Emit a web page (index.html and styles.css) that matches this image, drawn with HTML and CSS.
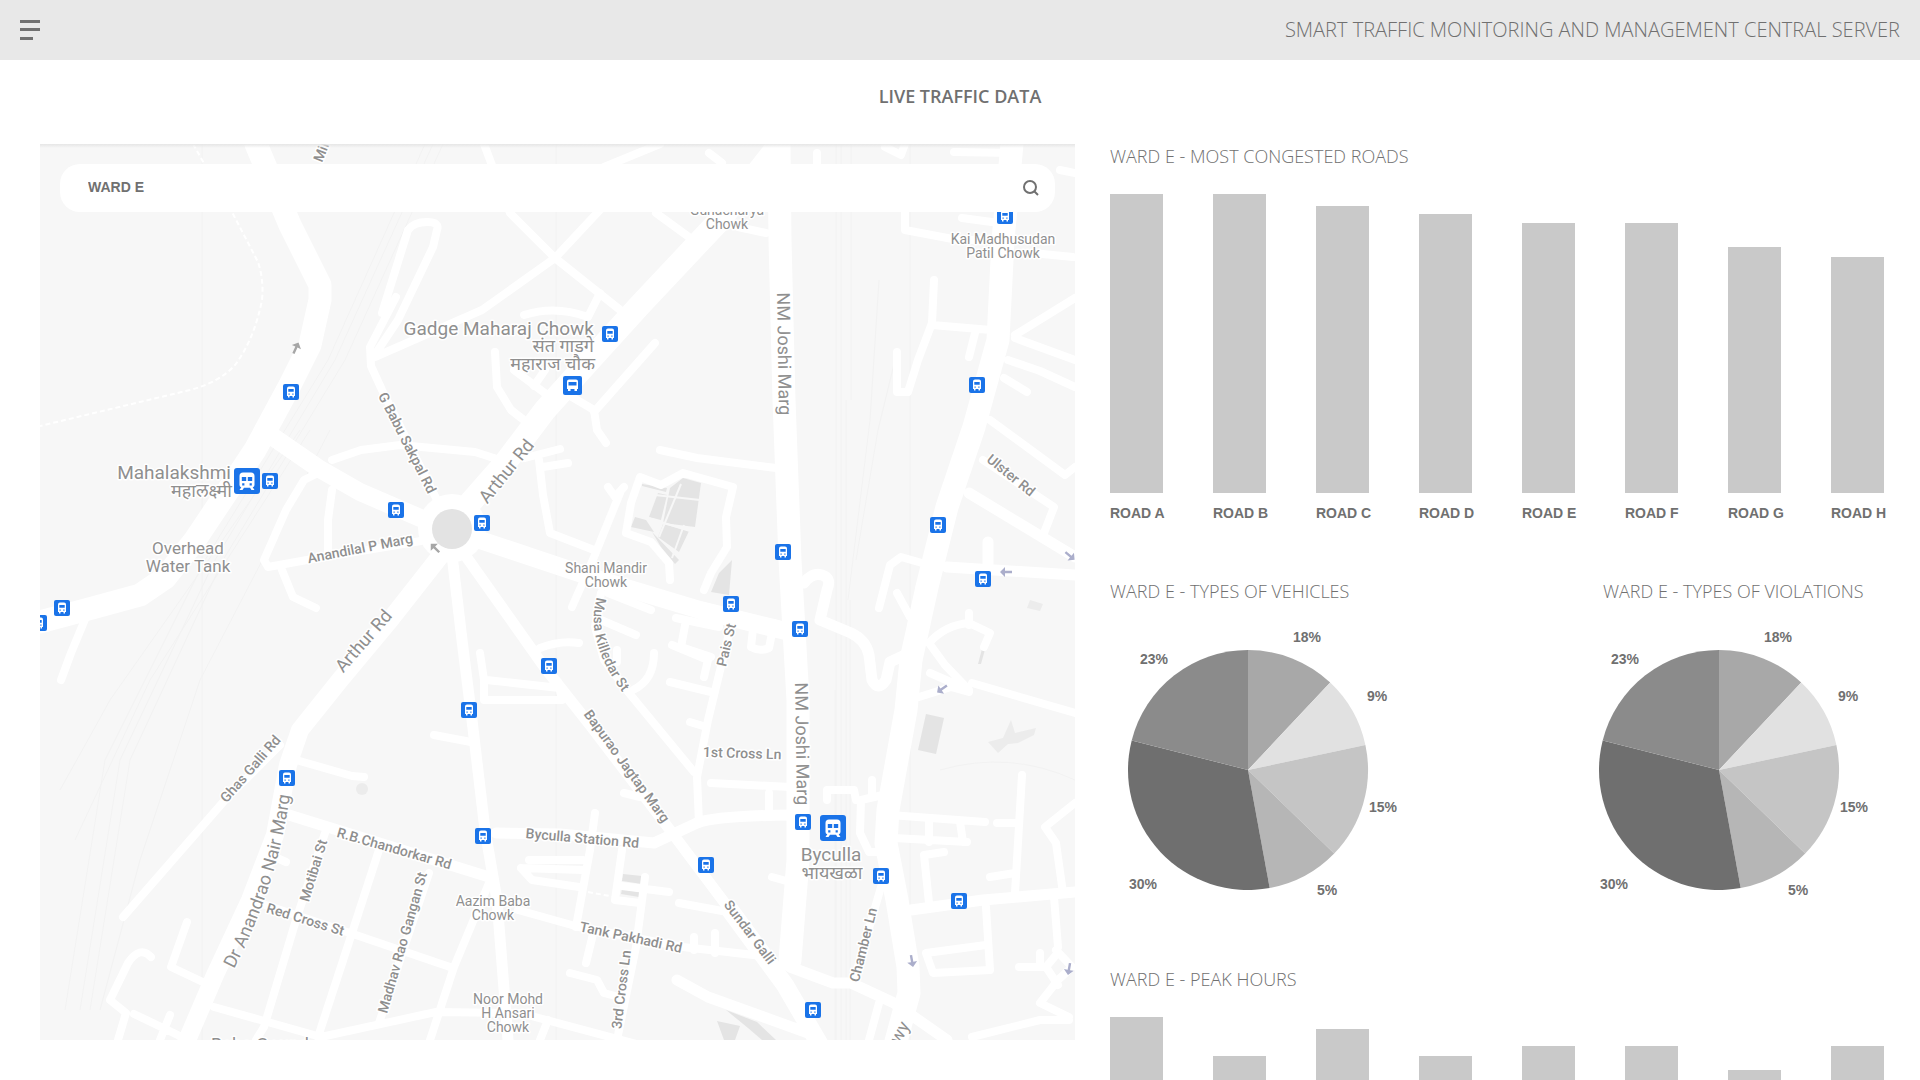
FILE: index.html
```html
<!DOCTYPE html>
<html lang="en">
<head>
<meta charset="utf-8">
<meta name="viewport" content="width=device-width, initial-scale=1">
<title>Smart Traffic Monitoring – Live Traffic Data</title>
<link rel="stylesheet" href="styles.css">
</head>
<body>
<header class="topbar">
  <button class="menu-button" type="button" aria-label="Open menu">
    <svg class="menu-icon" viewBox="0 0 20 20" aria-hidden="true"><path d="M0 0h20v3H0zM0 8h20v3H0zM0 17h13v3H0z"/></svg>
  </button>
  <p class="product-name">SMART TRAFFIC MONITORING AND MANAGEMENT CENTRAL SERVER</p>
</header>

<h1 class="page-title">LIVE TRAFFIC DATA</h1>

<main class="dashboard">
  <section class="map" aria-label="Traffic map">
    <svg class="map-canvas" viewBox="40 144 1035 896" role="img" aria-label="Map of Ward E">
      <defs>
        <symbol id="bus" viewBox="0 0 16 16">
          <rect class="pin" width="16" height="16" rx="2"/>
          <path class="glyph" fill-rule="evenodd" d="M4 12V4.500Q4 2.500 6 2.500h4q2 0 2 2V12h-1v1.500H9.500V12h-3v1.500H5V12zM5.300 5v2.800h5.400V5zM5.500 9.500v1.200h1.200V9.500zM9.300 9.500v1.200h1.200V9.500z"/>
        </symbol>
        <symbol id="hub" viewBox="0 0 19 19">
          <rect class="pin" width="19" height="19" rx="2"/>
          <path class="glyph" fill-rule="evenodd" d="M4 13V5.500Q4 3.500 6 3.500h7q2 0 2 2V13h-1v2h-2.500v-2h-4v2H5v-2zM5.500 6v3.500h8V6z"/>
        </symbol>
        <symbol id="train" viewBox="0 0 26 26">
          <rect class="pin" width="26" height="26" rx="3"/>
          <path class="glyph" fill-rule="evenodd" d="M5.500 17V8Q5.500 4.500 9 4.500h8q3.500 0 3.500 3.500v9q0 1.800-1.800 2.200L20.500 22h-3l-1.500-2.200h-6L8.500 22h-3l1.800-2.800Q5.500 18.800 5.500 17zM7.800 9v4h4.400V9zM13.800 9v4h4.400V9zM8.200 15.200v2.200h2.200v-2.200zM15.600 15.200v2.200h2.200v-2.200z"/>
        </symbol>
        <path id="arrow" d="M-6-1.200H1V-5L6 0 1 5V1.200H-6z"/>
        <path id="musa" d="M597 597Q584 640 623 693"/>
        <path id="nair" d="M234 969Q280 880 291 786"/>
      </defs>

      <rect class="land" x="40" y="144" width="1035" height="896"/>

      <g class="rails">
        <path d="M433 144L335 360 215 560 120 760 80 1010M443 144L345 360 223 560 130 760 90 1010M425 144L328 360 205 560 105 760 65 1010M330 430L200 680 140 860 100 1010M310 430L150 680 75 840M300 430L110 700 60 790"/>
        <path d="M836 144V1040M841 144V1040M846 400V1040M851 144V400M879 280L870 420 848 600M895 360L878 430 856 560M850 600V1040M835 690V1040M940 770Q1010 750 1075 780"/>
        <path d="M202 144V1040M556 144V1040M910 144V1040"/>
      </g>

      <g class="blocks">
        <path d="M642 484L667 488 666 492 642 486zM658 493L667 495 661 520 649 517zM670 488L683 478 701 483 695 527 663 523zM635 517L646 520 654 532 631 527zM663 524L689 531 679 552 658 537zM652 532L679 560 675 564 661 547z"/>
        <path d="M732 560L729 595 711 592 719 573zM717 1021L740 1026 735 1040 724 1040zM726 1010L757 1022 776 1040 762 1040 748 1028zM926 714L944 718 936 754 918 750z"/>
        <path class="faint" d="M988 742L1003 738 1011 720 1015 733 1036 728 1034 735 1018 743 1008 744 998 753zM1030 600L1043 604 1040 611 1027 608z"/>
        <path d="M983 645L986 646 981 664 978 664zM952 679L972 685 971 687 952 681zM623 874L642 876 642 884 622 881zM622 889L639 892 639 897 621 894z"/>
        <circle class="faint" cx="362" cy="789" r="6"/>
      </g>
      <path class="paths" d="M648 518L690 531M681 484L659 537M684 525L672 558M655 495L700 500"/>

      <g class="roads narrow">
        <path d="M382 313L408 230Q414 222 427 222T437 230L433 247 398 320 376 353M396 297L370 347 371 366 382 390 442 510M375 357L482 310 555 258 612 197M484 144L510 213 555 258 624 313M524 315Q555 305 588 317L600 293"/>
        <path d="M604 167L660 144M495 352L497 387 511 410 529 424M514 370L550 397M534 386L545 370M332 460L361 450 400 445 475 452 500 460M318 473L304 480 286 510 264 560 268 567 307 560 421 541M332 490L328 520V555M282 570L293 597 316 608M86 617L71 653 61 680"/>
        <path d="M539 460L543 495 550 533 594 550M525 458L560 449M543 467L568 463M480 653L484 680V700H562L558 682M486 680L560 688M540 648Q560 640 579 643M572 397L594 410 597 430 606 443M594 412L640 360 655 343M660 450L697 458 776 468"/>
        <path d="M626 533L631 503 640 477 661 485 683 473 733 487 726 517 727 547 711 573 704 590M626 533L651 542 669 563 670 580M608 487L615 497 624 487M620 493L594 557 572 607M608 593L651 610M601 620L636 635M676 618L719 627M686 620L681 647 711 657M672 645L708 660 704 677M670 682L711 692M654 653Q654 680 633 690"/>
        <path d="M733 617L708 720 697 777 699 823M754 620L751 647Q760 652 769 648L774 623M617 650V662M601 593L595 627 604 660 629 693 694 772M879 608L890 565 901 557 922 563M897 593L910 617M990 420L1065 475 1075 467M983 460L1054 507 1044 533M1008 360L1040 371 1075 387M1004 378L1027 392"/>
        <path d="M934 280L932 323 918 360 908 392H897V352M932 325L991 330M975 333L969 357M1015 335L1075 298M1015 338L1075 360M1073 257L1032 253M905 213V230L958 240H1000M962 218L999 223M885 147L901 155 905 144M954 152L1015 153M1060 170L1075 173M709 153L722 163M779 144L771 163M817 153V164M656 213L693 240M738 227L766 233"/>
        <path d="M929 643Q945 625 969 623L990 633 984 647M969 613V625M929 643L945 665 969 690 930 673M972 683L1075 713M919 697L951 687 969 692M280 745L225 800 123 917M296 760L352 776 364 777M275 857L286 862M325 833L296 920 264 1027 256 1040M379 850L352 933 318 1037M429 873L379 1023M250 900L350 933 450 967M489 883L454 967 430 1040"/>
        <path d="M214 1007L321 1037 436 1012 520 1013 640 1045M518 910L579 927 683 947 772 957M434 735L471 742M187 922L171 967 207 984M151 957Q140 945 128 963L110 1000 126 1013 118 1040M134 1014L182 1037M170 1015L160 1040M529 860H583M521 868L583 870M521 868L532 880 579 887"/>
        <path d="M595 813L590 850 576 927M622 850L615 900 640 903M645 877L636 947 617 1040M622 886L669 892M594 930L586 963M679 903L733 913M624 793L640 797M769 793V813M711 783L790 787M690 722L703 726M772 877L790 882M694 937V950M715 933V953M570 973L597 980 604 993 619 997M548 1020L540 1040"/>
        <path d="M827 800V790H854L856 800M872 780V793M861 800L860 833 869 852H885M861 800L883 795M890 815L985 822M929 822V842M960 822L963 842M894 838L967 842M944 852L924 855 929 903M1022 775L1015 893M997 823H1018M990 877L1015 873M1075 803L1045 827 1056 843 1063 893M1054 897L1058 947"/>
        <path d="M1056 950L1072 967 1058 980 1040 1003 1069 1017M1056 955L1046 967 1058 985M1019 967H1047M1040 953V967M972 1037L1040 1020 1069 1020M986 907L990 970 933 973 926 953 986 945M881 887L854 980M879 1003L869 1040"/>
      </g>

      <g class="roads medium">
        <path d="M452 555L462 640 472 720 485 830 497 900 508 1040M465 555L545 668 590 725 670 830 730 910M289 815L489 877M496 833L560 834 654 843 697 823Q715 816 790 815M804 583Q812 572 822 575T827 590L820 620 851 633Q866 640 869 655L872 680Q878 692 886 680L890 662 905 655M969 493L1075 557M947 567L1075 575M988 542V565M677 980L708 997 819 1037M790 967L833 983H851L894 1003 947 1040M911 910L983 900 1075 892"/>
      </g>

      <g class="roads wide">
        <path d="M263 430L318 468 360 492 425 520M480 540L540 560 600 580 700 610 790 632M445 550L390 620 340 680 300 730 288 765 275 835 250 900 215 975 185 1045M730 910L785 985 820 1045"/>
      </g>

      <g class="roads arterial">
        <path d="M256 144L290 225 320 285V300L310 345 290 385 255 450 195 540 165 578 140 595 85 610 40 622M455 520L505 463 545 410 590 360 640 305 720 220 775 150M779 144L780 240 784 400 790 560 798 700V860L790 960M1012 144L1003 240 998 340 974 427 947 507 927 587 911 660 906 710 888 810 886 843 897 900 908 967 909 993 895 1045"/>
      </g>

      <circle class="roundabout" cx="452" cy="528" r="34"/>
      <circle class="island" cx="452" cy="529" r="20"/>
      <path class="track" d="M193 144L205 165 232 212 258 262Q264 280 262 300 254 340 235 365 220 382 190 390L40 426M588 892L615 897"/>

      <g class="arrows">
        <use href="#arrow" class="gray" transform="translate(296 348) rotate(-65)"/>
        <use href="#arrow" class="gray" transform="translate(435 548) rotate(-135)"/>
        <use href="#arrow" transform="translate(1070 556) rotate(40)"/>
        <use href="#arrow" transform="translate(1006 572) rotate(180)"/>
        <use href="#arrow" transform="translate(942 689) rotate(145)"/>
        <use href="#arrow" transform="translate(912 961) rotate(80)"/>
        <use href="#arrow" transform="translate(1069 969) rotate(100)"/>
      </g>

      <g class="label street">
        <text transform="translate(322 163) rotate(-68)">Mill Rd</text>
        <g text-anchor="middle">
          <text transform="translate(403 445) rotate(63)">G Babu Sakpal Rd</text>
          <text transform="translate(361 553) rotate(-11)">Anandilal P Marg</text>
          <text transform="translate(1008 479) rotate(39)">Ulster Rd</text>
          <text transform="translate(731 646) rotate(-77)">Pais St</text>
          <text transform="translate(623 769) rotate(54)">Bapurao Jagtap Marg</text>
          <text transform="translate(582 843) rotate(5)">Byculla Station Rd</text>
          <text transform="translate(742 758) rotate(2)">1st Cross Ln</text>
          <text transform="translate(254 772) rotate(-49)">Ghas Galli Rd</text>
          <text transform="translate(318 872) rotate(-73)">Motibai St</text>
          <text transform="translate(304 924) rotate(17)">Red Cross St</text>
          <text transform="translate(393 853) rotate(16)">R.B.Chandorkar Rd</text>
          <text transform="translate(407 944) rotate(-74)">Madhav Rao Gangan St</text>
          <text transform="translate(630 942) rotate(12)">Tank Pakhadi Rd</text>
          <text transform="translate(626 990) rotate(-83)">3rd Cross Ln</text>
          <text transform="translate(746 935) rotate(53)">Sundar Galli</text>
          <text transform="translate(868 946) rotate(-76)">Chamber Ln</text>
        </g>
        <text><textPath href="#musa">Musa Killedar St</textPath></text>
      </g>

      <g class="label avenue">
        <g text-anchor="middle">
          <text transform="translate(778 354) rotate(89)">NM Joshi Marg</text>
          <text transform="translate(796 744) rotate(89)">NM Joshi Marg</text>
          <text transform="translate(511 475) rotate(-51)">Arthur Rd</text>
          <text transform="translate(368 645) rotate(-49)">Arthur Rd</text>
          <text transform="translate(902 1041) rotate(-62)">Hwy</text>
        </g>
        <text><textPath href="#nair">Dr Anandrao Nair Marg</textPath></text>
        <text x="211" y="1051">Baba Gound</text>
      </g>

      <g class="label place" text-anchor="middle">
        <text><tspan x="727" y="215">Gunacharya</tspan><tspan x="727" y="229">Chowk</tspan></text>
        <text><tspan x="1003" y="244">Kai Madhusudan</tspan><tspan x="1003" y="258">Patil Chowk</tspan></text>
        <text><tspan x="606" y="573">Shani Mandir</tspan><tspan x="606" y="587">Chowk</tspan></text>
        <text><tspan x="493" y="906">Aazim Baba</tspan><tspan x="493" y="920">Chowk</tspan></text>
        <text><tspan x="508" y="1004">Noor Mohd</tspan><tspan x="508" y="1018">H Ansari</tspan><tspan x="508" y="1032">Chowk</tspan></text>
        <text class="landmark"><tspan x="188" y="554">Overhead</tspan><tspan x="188" y="572">Water Tank</tspan></text>
      </g>

      <g class="label station">
        <g text-anchor="end">
          <text x="594" y="335">Gadge Maharaj Chowk</text>
          <text x="231" y="479">Mahalakshmi</text>
          <text class="local" lang="mr" x="594" y="352">संत गाडगे</text>
          <text class="local" lang="mr" x="595" y="370">महाराज चौक</text>
          <text class="local" lang="mr" x="232" y="497">महालक्ष्मी</text>
        </g>
        <g text-anchor="middle">
          <text x="831" y="861">Byculla</text>
          <text class="local" lang="mr" x="832" y="879">भायखळा</text>
        </g>
      </g>

      <g class="stops">
        <use href="#bus" x="283" y="384" width="16" height="16"/>
        <use href="#bus" x="262" y="473" width="16" height="16"/>
        <use href="#bus" x="388" y="502" width="16" height="16"/>
        <use href="#bus" x="474" y="515" width="16" height="16"/>
        <use href="#bus" x="54" y="600" width="16" height="16"/>
        <use href="#bus" x="31" y="615" width="16" height="16"/>
        <use href="#bus" x="541" y="658" width="16" height="16"/>
        <use href="#bus" x="461" y="702" width="16" height="16"/>
        <use href="#bus" x="602" y="326" width="16" height="16"/>
        <use href="#bus" x="997" y="208" width="16" height="16"/>
        <use href="#bus" x="969" y="377" width="16" height="16"/>
        <use href="#bus" x="930" y="517" width="16" height="16"/>
        <use href="#bus" x="775" y="544" width="16" height="16"/>
        <use href="#bus" x="975" y="571" width="16" height="16"/>
        <use href="#bus" x="723" y="596" width="16" height="16"/>
        <use href="#bus" x="792" y="621" width="16" height="16"/>
        <use href="#bus" x="279" y="770" width="16" height="16"/>
        <use href="#bus" x="475" y="828" width="16" height="16"/>
        <use href="#bus" x="698" y="857" width="16" height="16"/>
        <use href="#bus" x="795" y="814" width="16" height="16"/>
        <use href="#bus" x="873" y="868" width="16" height="16"/>
        <use href="#bus" x="951" y="893" width="16" height="16"/>
        <use href="#bus" x="805" y="1002" width="16" height="16"/>
        <use href="#hub" x="563" y="376" width="19" height="19"/>
        <use href="#train" x="234" y="468" width="26" height="26"/>
        <use href="#train" x="820" y="815" width="26" height="26"/>
      </g>
    </svg>

    <form class="search" role="search">
      <input class="search-input" type="text" value="WARD E" aria-label="Search ward">
      <button class="search-button" type="button" aria-label="Search">
        <svg class="search-icon" viewBox="0 0 16 16" aria-hidden="true"><circle cx="7" cy="7" r="6"/><path d="M11.500 11.500L15 15"/></svg>
      </button>
    </form>
  </section>

  <div class="insights">
    <section class="panel">
      <h2 class="panel-title">WARD E - MOST CONGESTED ROADS</h2>
      <ul class="bars roads-chart">
        <li class="bar-item"><span class="bar" style="height:299px"></span><span class="bar-label">ROAD A</span></li>
        <li class="bar-item"><span class="bar" style="height:299px"></span><span class="bar-label">ROAD B</span></li>
        <li class="bar-item"><span class="bar" style="height:287px"></span><span class="bar-label">ROAD C</span></li>
        <li class="bar-item"><span class="bar" style="height:279px"></span><span class="bar-label">ROAD D</span></li>
        <li class="bar-item"><span class="bar" style="height:270px"></span><span class="bar-label">ROAD E</span></li>
        <li class="bar-item"><span class="bar" style="height:270px"></span><span class="bar-label">ROAD F</span></li>
        <li class="bar-item"><span class="bar" style="height:246px"></span><span class="bar-label">ROAD G</span></li>
        <li class="bar-item"><span class="bar" style="height:236px"></span><span class="bar-label">ROAD H</span></li>
      </ul>
    </section>

    <div class="pie-row">
      <section class="panel">
        <h2 class="panel-title">WARD E - TYPES OF VEHICLES</h2>
        <svg class="pie pie-indent" viewBox="-120 -141 285 271" role="img" aria-label="Types of vehicles">
          <g id="pie-slices">
            <path fill="#a8a8a8" d="M0 0V-120A120 120 0 0 1 82.200-87.500z"/>
            <path fill="#e1e1e1" d="M0 0L82.200-87.500A120 120 0 0 1 117.400-25z"/>
            <path fill="#c5c5c5" d="M0 0L117.400-25A120 120 0 0 1 86.200 83.500z"/>
            <path fill="#b6b6b6" d="M0 0L86.200 83.500A120 120 0 0 1 21.700 118z"/>
            <path fill="#6f6f6f" d="M0 0L21.700 118A120 120 0 0 1-116.300-29.600z"/>
            <path fill="#8b8b8b" d="M0 0L-116.300-29.600A120 120 0 0 1 0-120z"/>
          </g>
          <g class="pie-label">
            <text x="45" y="-128">18%</text><text x="119" y="-69">9%</text><text x="121" y="42">15%</text>
            <text x="69" y="125">5%</text><text x="-119" y="119">30%</text><text x="-108" y="-106">23%</text>
          </g>
        </svg>
      </section>
      <section class="panel">
        <h2 class="panel-title title-indent">WARD E - TYPES OF VIOLATIONS</h2>
        <svg class="pie" viewBox="-120 -141 285 271" role="img" aria-label="Types of violations">
          <use href="#pie-slices"/>
          <g class="pie-label">
            <text x="45" y="-128">18%</text><text x="119" y="-69">9%</text><text x="121" y="42">15%</text>
            <text x="69" y="125">5%</text><text x="-119" y="119">30%</text><text x="-108" y="-106">23%</text>
          </g>
        </svg>
      </section>
    </div>

    <section class="panel">
      <h2 class="panel-title">WARD E - PEAK HOURS</h2>
      <ul class="bars">
        <li class="bar-item"><span class="bar" style="height:63px"></span></li>
        <li class="bar-item"><span class="bar" style="height:24px"></span></li>
        <li class="bar-item"><span class="bar" style="height:51px"></span></li>
        <li class="bar-item"><span class="bar" style="height:24px"></span></li>
        <li class="bar-item"><span class="bar" style="height:34px"></span></li>
        <li class="bar-item"><span class="bar" style="height:34px"></span></li>
        <li class="bar-item"><span class="bar" style="height:10px"></span></li>
        <li class="bar-item"><span class="bar" style="height:34px"></span></li>
      </ul>
    </section>
  </div>
</main>
</body>
</html>
```
FILE: styles.css
```css
* {
  box-sizing: border-box;
}

body {
  margin: 0;
  background: #fff;
  color: #707070;
  font-family: "Open Sans", "Noto Sans", sans-serif;
}

button {
  padding: 0;
  border: 0;
  background: none;
  cursor: pointer;
}

.topbar {
  display: flex;
  align-items: center;
  justify-content: space-between;
  height: 60px;
  padding: 0 20px;
  background: #e8e8e8;
}

.menu-icon {
  display: block;
  width: 20px;
  height: 20px;
  fill: #707070;
}

.product-name {
  margin: 0;
  font-size: 20px;
  font-weight: 350;
  line-height: 24px;
}

.page-title {
  margin: 0;
  padding: 24px 0 36px;
  font-size: 18px;
  font-weight: 600;
  line-height: 24px;
  text-align: center;
}

.dashboard {
  display: grid;
  grid-template-columns: minmax(0, 1035fr) minmax(0, 774fr);
  align-items: start;
  gap: 35px;
  padding: 0 36px 0 40px;
}

/* Map */

.map {
  position: relative;
}

.map::before {
  content: "";
  position: absolute;
  inset: 0 0 auto;
  height: 4px;
  background: linear-gradient(#e6e6e6, transparent);
}

.map-canvas {
  display: block;
  width: 100%;
  height: auto;
}

.land { fill: #f7f7f7; }
.rails { fill: none; stroke: #f2f2f2; stroke-width: 1; }
.blocks { fill: #e4e4e4; }
.blocks .faint { fill: #ececec; }
.paths { fill: none; stroke: #f7f7f7; stroke-width: 2; }
.roads { fill: none; stroke: #fff; stroke-linecap: round; stroke-linejoin: round; }
.narrow { stroke-width: 8px; }
.medium { stroke-width: 11px; }
.wide { stroke-width: 18px; }
.arterial { stroke-width: 23px; }
.roundabout { fill: #fff; }
.island { fill: #e3e3e3; }
.track { fill: none; stroke: #fff; stroke-width: 2; stroke-dasharray: 5 3; }
.arrows { fill: #abaecb; }
.arrows .gray { fill: #a6a6a6; }
.pin { fill: #1a73e8; }
.glyph { fill: #fff; }

.label {
  fill: #8f8f8f;
  stroke: #fff;
  stroke-width: 3px;
  stroke-linejoin: round;
  paint-order: stroke;
  font-family: Roboto, "Noto Sans", sans-serif;
}

.street { font-size: 14px; font-weight: 500; }
.avenue { font-size: 18px; }
.place { font-size: 14px; }
.landmark { font-size: 17px; }
.station { font-size: 19px; }
.local { font-size: 18px; }

.search {
  position: absolute;
  inset: 20px 20px auto;
  display: flex;
  align-items: center;
  height: 48px;
  padding: 0 16px 0 28px;
  border-radius: 20px;
  background: #fff;
}

.search-input {
  flex: 1;
  min-width: 0;
  padding: 0 0 2px;
  border: 0;
  outline: 0;
  background: none;
  color: #707070;
  font: 700 14px/20px "Liberation Sans", Arial, sans-serif;
}

.search-icon {
  display: block;
  width: 16px;
  height: 16px;
  fill: none;
  stroke: #707070;
  stroke-width: 2;
}

/* Charts */

.panel-title {
  margin: 0 0 25px;
  font-size: 18px;
  font-weight: 300;
  line-height: 25px;
  white-space: nowrap;
}

.title-indent {
  padding-left: 4px;
}

.bars {
  display: flex;
  align-items: flex-end;
  justify-content: space-between;
  margin: 0;
  padding: 0;
  list-style: none;
}

.bar-item {
  width: 53px;
}

.bar {
  display: block;
  background: #c9c9c9;
}

.bar-label,
.pie-label {
  font-family: "Liberation Sans", Arial, sans-serif;
  font-size: 14px;
  font-weight: 700;
}

.bar-label {
  display: block;
  margin-top: 10px;
  line-height: 20px;
  white-space: nowrap;
}

.pie-row {
  display: flex;
  justify-content: space-between;
  margin: 56px 0 67px;
}

.pie {
  display: block;
  width: 285px;
}

.pie-indent {
  margin-left: 18px;
}

.pie-label {
  fill: #707070;
}
```
